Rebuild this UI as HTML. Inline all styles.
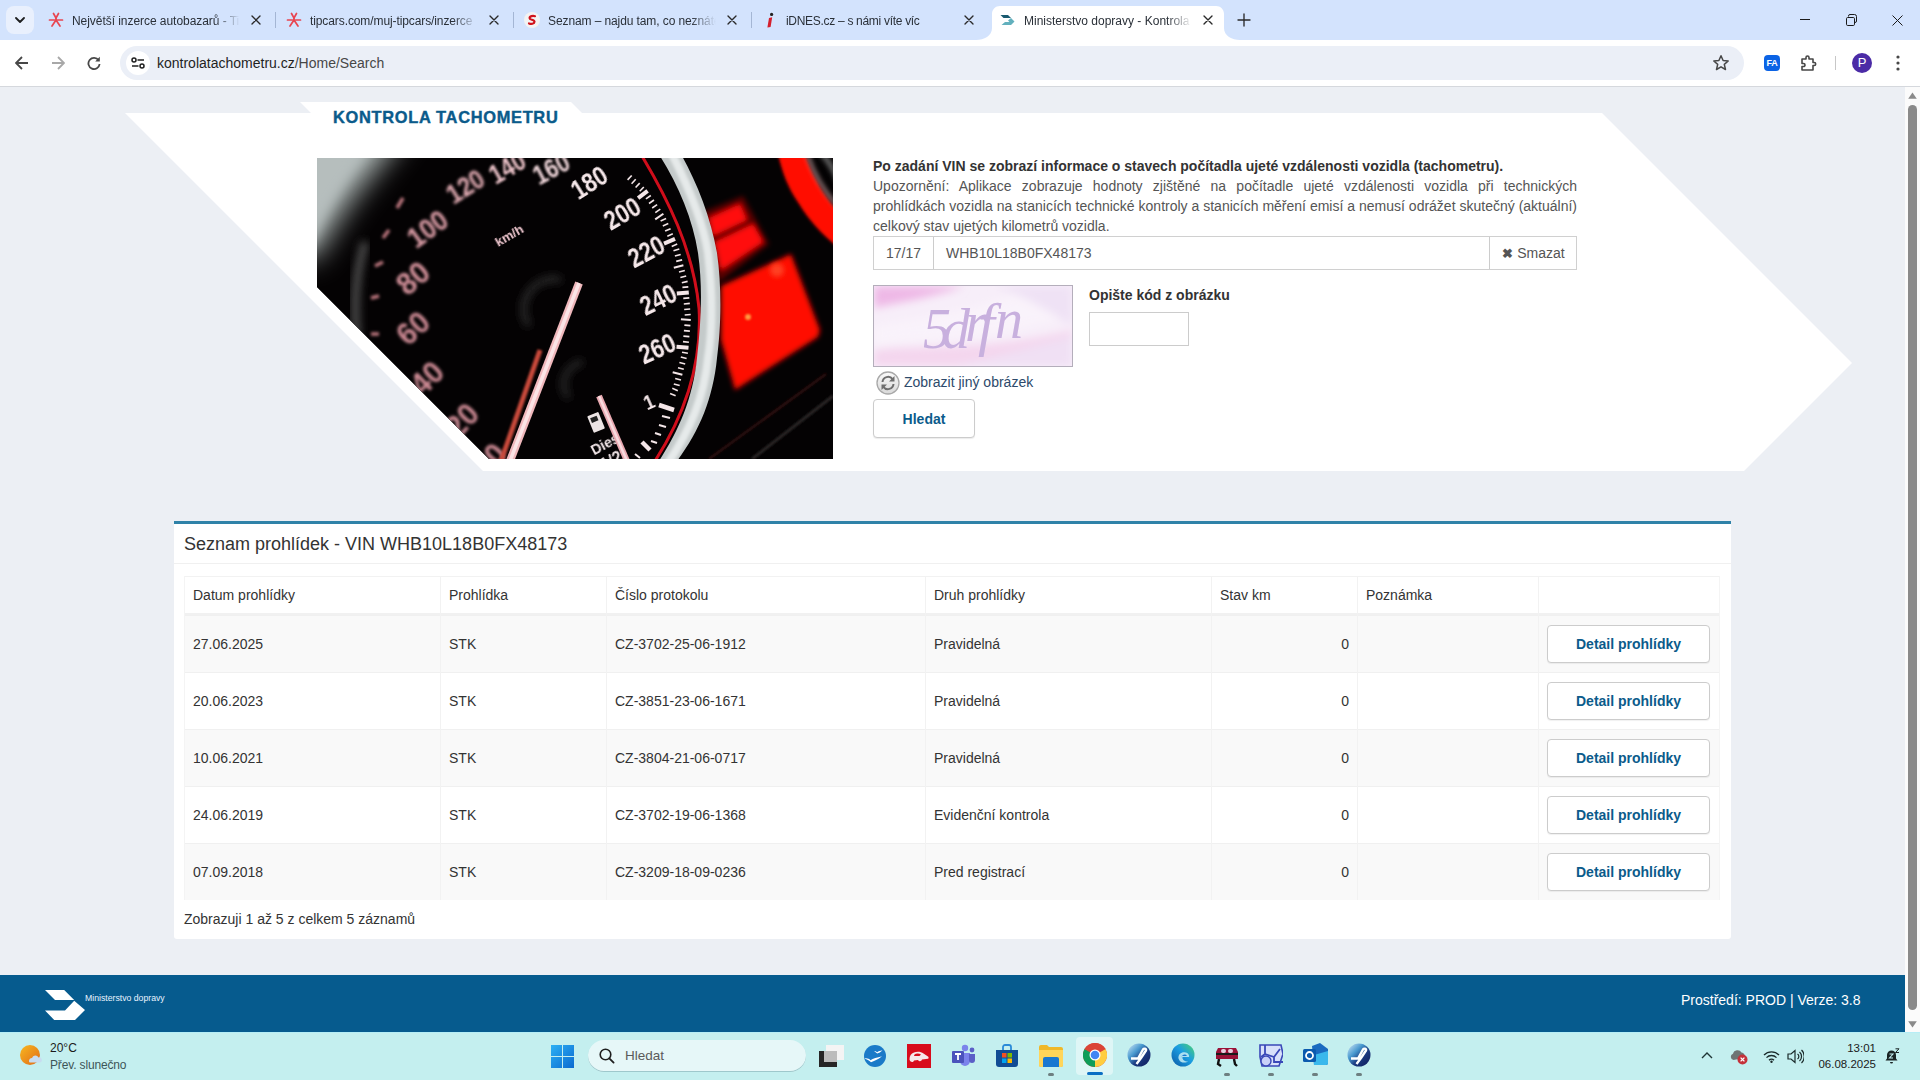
<!DOCTYPE html>
<html><head><meta charset="utf-8">
<style>
*{box-sizing:border-box;margin:0;padding:0}
html,body{width:1920px;height:1080px;overflow:hidden;font-family:"Liberation Sans",sans-serif;background:#eceff4}
.abs{position:absolute}
svg{display:block}
#tabstrip{position:absolute;left:0;top:0;width:1920px;height:40px;background:#d3e3fd}
.tab{position:absolute;top:0;height:40px;font-size:12px;color:#1f1f1f}
.tab .t{position:absolute;top:14px;white-space:nowrap;overflow:hidden;line-height:14px}
.tab .x{position:absolute;top:13px;width:14px;height:14px}
.sep{position:absolute;top:12px;width:1px;height:16px;background:#a4b6d4}
.ttxt{top:14px;font-size:12px;letter-spacing:-0.3px;line-height:14px;color:#2a3038;white-space:nowrap;overflow:hidden;-webkit-mask-image:linear-gradient(90deg,#000 85%,transparent 100%)}
#toolbar{position:absolute;left:0;top:40px;width:1920px;height:46px;background:#fff}
#omni{position:absolute;left:120px;top:6px;width:1624px;height:34px;border-radius:17px;background:#ebeff7}
#page{position:absolute;left:0;top:87px;width:1905px;height:945px;background:#eceff4;overflow:hidden}
#topline{position:absolute;left:0;top:86px;width:1920px;height:1px;background:#d5d8dd}
#scroll{position:absolute;left:1905px;top:87px;width:15px;height:945px;background:#fbfbfb}
.cell{font-size:14px;line-height:20px;color:#333;white-space:nowrap}
.btn{width:163px;height:38px;border:1px solid #ccc;border-radius:4px;background:#fff;box-shadow:0 1px 1px rgba(0,0,0,.06);font-size:14px;font-weight:bold;color:#0b5b8b;line-height:36px;text-align:center}
#taskbar{position:absolute;left:0;top:1032px;width:1920px;height:48px;background:#c4efef}
</style></head><body>
<div id="tabstrip">
<div class="abs" style="left:6px;top:6px;width:28px;height:28px;border-radius:8px;background:#e9f0fd"><svg class="abs" style="left:9px;top:11px" width="10" height="6" viewBox="0 0 10 6"><path d="M1 1L5 5L9 1" stroke="#1f1f1f" stroke-width="1.8" fill="none" stroke-linecap="round" stroke-linejoin="round"/></svg></div>
<div class="abs" style="left:48px;top:12px;width:16px;height:16px"><svg width="16" height="16" viewBox="0 0 16 16"><g stroke="#e84550" stroke-width="1.7" stroke-linecap="round" fill="none"><path d="M5.5 1.5L8 6L10.5 1.5"/><path d="M8 6V8"/><path d="M1.5 8H6.5M9.5 8H14.5"/><path d="M8 8L4 14M8 8L12 14"/></g></svg></div><div class="abs ttxt" style="left:72px;width:168px;letter-spacing:-0.05px">Největší inzerce autobazarů - TipCars</div><div class="abs" style="left:251px;top:15px;width:10px;height:10px"><svg width="10" height="10" viewBox="0 0 10 10"><path d="M1 1L9 9M9 1L1 9" stroke="#2a2a2a" stroke-width="1.35" stroke-linecap="round"/></svg></div>
<div class="sep" style="left:275px"></div>
<div class="abs" style="left:286px;top:12px;width:16px;height:16px"><svg width="16" height="16" viewBox="0 0 16 16"><g stroke="#e84550" stroke-width="1.7" stroke-linecap="round" fill="none"><path d="M5.5 1.5L8 6L10.5 1.5"/><path d="M8 6V8"/><path d="M1.5 8H6.5M9.5 8H14.5"/><path d="M8 8L4 14M8 8L12 14"/></g></svg></div><div class="abs ttxt" style="left:310px;width:168px;letter-spacing:-0.1px">tipcars.com/muj-tipcars/inzerce</div><div class="abs" style="left:489px;top:15px;width:10px;height:10px"><svg width="10" height="10" viewBox="0 0 10 10"><path d="M1 1L9 9M9 1L1 9" stroke="#2a2a2a" stroke-width="1.35" stroke-linecap="round"/></svg></div>
<div class="sep" style="left:513px"></div>
<div class="abs" style="left:524px;top:12px;width:16px;height:16px"><svg width="16" height="16" viewBox="0 0 16 16"><circle cx="8" cy="8" r="8" fill="#f3f3f3"/><path d="M11 4.2C9 3.6 5.5 4 5.6 6.2C5.7 8 10.6 7.6 10.5 9.8C10.4 12 7 12.2 5 11.4" stroke="#d0121b" stroke-width="2.2" fill="none" stroke-linecap="round"/></svg></div><div class="abs ttxt" style="left:548px;width:168px;letter-spacing:-0.1px">Seznam – najdu tam, co neznáte</div><div class="abs" style="left:727px;top:15px;width:10px;height:10px"><svg width="10" height="10" viewBox="0 0 10 10"><path d="M1 1L9 9M9 1L1 9" stroke="#2a2a2a" stroke-width="1.35" stroke-linecap="round"/></svg></div>
<div class="sep" style="left:751px"></div>
<div class="abs" style="left:762px;top:12px;width:16px;height:16px"><svg width="16" height="16" viewBox="0 0 16 16"><path d="M7 6L10.2 5.2L8.6 15L5.4 15.6Z" fill="#d4202e"/><circle cx="9.6" cy="2.4" r="1.6" fill="#222"/></svg></div><div class="abs ttxt" style="left:786px;width:168px">iDNES.cz – s námi víte víc</div><div class="abs" style="left:964px;top:15px;width:10px;height:10px"><svg width="10" height="10" viewBox="0 0 10 10"><path d="M1 1L9 9M9 1L1 9" stroke="#2a2a2a" stroke-width="1.35" stroke-linecap="round"/></svg></div>
<svg class="abs" style="left:976px;top:6px" width="264" height="34" viewBox="0 0 264 34"><path d="M0 34C8 34 16 30 16 22V8C16 3.5 19.5 0 24 0H240C244.5 0 248 3.5 248 8V22C248 30 256 34 264 34Z" fill="#fff"/></svg>
<div class="abs" style="left:1000px;top:12px;width:16px;height:16px"><svg width="16" height="16" viewBox="0 0 16 16"><path d="M0.5 3H8L11 6H3.5Z" fill="#195a70"/><path d="M11 6L14.5 9.5L11 13H1.5L5 10H9.5L8 8.5Z" fill="#62b0bd"/></svg></div><div class="abs ttxt" style="left:1024px;width:168px;letter-spacing:0">Ministerstvo dopravy - Kontrola tachometru</div><div class="abs" style="left:1203px;top:15px;width:10px;height:10px"><svg width="10" height="10" viewBox="0 0 10 10"><path d="M1 1L9 9M9 1L1 9" stroke="#2a2a2a" stroke-width="1.35" stroke-linecap="round"/></svg></div>
<svg class="abs" style="left:1237px;top:13px" width="14" height="14" viewBox="0 0 14 14"><path d="M7 1V13M1 7H13" stroke="#2a2a2a" stroke-width="1.35" stroke-linecap="round"/></svg>
<svg class="abs" style="left:1800px;top:14px" width="10" height="10" viewBox="0 0 10 10"><path d="M0 5.5H10" stroke="#1a1a1a" stroke-width="1"/></svg>
<svg class="abs" style="left:1845px;top:14px" width="12" height="12" viewBox="0 0 12 12"><path d="M3.5 2.5V2Q3.5 0.5 5 0.5H9.5Q11.5 0.5 11.5 2.5V7Q11.5 8.5 10 8.5H9.5" stroke="#1a1a1a" stroke-width="1" fill="none"/><rect x="1.5" y="3.5" width="8" height="8" rx="1.2" stroke="#1a1a1a" stroke-width="1" fill="none"/></svg>
<svg class="abs" style="left:1892px;top:15px" width="11" height="11" viewBox="0 0 11 11"><path d="M0.5 0.5L10.5 10.5M10.5 0.5L0.5 10.5" stroke="#1a1a1a" stroke-width="1"/></svg>
</div>
<div id="toolbar">
<svg class="abs" style="left:15px;top:16px" width="14" height="14" viewBox="0 0 14 14"><path d="M13 7H1.5M7 1L1 7L7 13" stroke="#474747" stroke-width="1.8" fill="none"/></svg>
<svg class="abs" style="left:51px;top:16px" width="14" height="14" viewBox="0 0 14 14"><path d="M1 7H12.5M7 1L13 7L7 13" stroke="#a8a8a8" stroke-width="1.8" fill="none"/></svg>
<svg class="abs" style="left:87px;top:16px" width="14" height="14" viewBox="0 0 14 14"><path d="M11.6 4.2A5.6 5.6 0 1 0 12.6 8" stroke="#474747" stroke-width="1.8" fill="none"/><path d="M12.8 0.8V5.4H8.2Z" fill="#474747"/></svg>
<div id="omni">
<div class="abs" style="left:6px;top:5px;width:24px;height:24px;border-radius:50%;background:#fff"><svg class="abs" style="left:5px;top:6px" width="14" height="12" viewBox="0 0 14 12"><circle cx="3" cy="3" r="2" stroke="#1f1f1f" stroke-width="1.5" fill="none"/><path d="M6.5 3H13" stroke="#1f1f1f" stroke-width="1.5"/><circle cx="11" cy="9" r="2" stroke="#1f1f1f" stroke-width="1.5" fill="none"/><path d="M1 9H7.5" stroke="#1f1f1f" stroke-width="1.5"/></svg></div>
<div class="abs" style="left:37px;top:8px;font-size:14px;line-height:18px;color:#1f1f1f;white-space:nowrap">kontrolatachometru.cz<span style="color:#474747">/Home/Search</span></div>
<svg class="abs" style="left:1592px;top:8px" width="18" height="18" viewBox="0 0 18 18"><path d="M9 1.8L11.1 6.5L16.2 7L12.3 10.4L13.5 15.5L9 12.8L4.5 15.5L5.7 10.4L1.8 7L6.9 6.5Z" stroke="#474747" stroke-width="1.5" fill="none" stroke-linejoin="round"/></svg>
</div>
<div class="abs" style="left:1764px;top:15px;width:16px;height:16px;border-radius:4px;background:#0b63e5;color:#fff;font-size:9px;font-weight:bold;line-height:16px;text-align:center;letter-spacing:-0.3px">FA</div>
<svg class="abs" style="left:1800px;top:14px" width="18" height="18" viewBox="0 0 18 18"><path d="M2 5H6V3.5A1.5 1.5 0 0 1 9 3.5V5H13V8.5H14.2A1.5 1.5 0 0 1 14.2 11.5H13V16H2V12.5H3.5A1.5 1.5 0 0 0 3.5 9.5H2Z" stroke="#474747" stroke-width="1.6" fill="none" stroke-linejoin="round"/></svg>
<div class="abs" style="left:1835px;top:16px;width:1px;height:14px;background:#c7c7c7"></div>
<div class="abs" style="left:1852px;top:13px;width:20px;height:20px;border-radius:50%;background:#4b2ba6;color:#fff;font-size:13px;line-height:20px;text-align:center">P</div>
<svg class="abs" style="left:1895px;top:15px" width="6" height="16" viewBox="0 0 6 16"><circle cx="3" cy="2" r="1.6" fill="#474747"/><circle cx="3" cy="8" r="1.6" fill="#474747"/><circle cx="3" cy="14" r="1.6" fill="#474747"/></svg>
</div>
<div id="topline"></div>
<div id="page">
<svg class="abs" style="left:0;top:0" width="1905" height="945" viewBox="0 87 1905 945">
<polygon points="125,113 1602,113 1852,363 1744,471 483,471" fill="#fff"/>
<polygon points="300,102 571,102 582,113 311,113" fill="#fff"/>
</svg>
<div class="abs" id="ttl" style="left:333px;top:20px;font-size:16.4px;letter-spacing:0.7px;-webkit-text-stroke:0.4px #0b5b8b;font-weight:bold;color:#0b5b8b;line-height:20px;white-space:nowrap">KONTROLA TACHOMETRU</div>
<div class="abs" id="speedo" style="left:317px;top:71px;width:516px;height:301px;clip-path:polygon(0 0,516px 0,516px 301px,172px 301px,0 129px);background:#050303"><svg width="516" height="301" viewBox="0 0 516 301">
<defs>
<filter id="b1" x="-30%" y="-30%" width="160%" height="160%"><feGaussianBlur stdDeviation="1.3"/></filter>
<filter id="b15" x="-30%" y="-30%" width="160%" height="160%"><feGaussianBlur stdDeviation="1.8"/></filter>
<filter id="b2" x="-30%" y="-30%" width="160%" height="160%"><feGaussianBlur stdDeviation="0.5"/></filter>
<filter id="b3" x="-30%" y="-30%" width="160%" height="160%"><feGaussianBlur stdDeviation="2.5"/></filter>
<filter id="b4" x="-50%" y="-50%" width="200%" height="200%"><feGaussianBlur stdDeviation="4"/></filter>
<filter id="b6" x="-50%" y="-50%" width="200%" height="200%"><feGaussianBlur stdDeviation="6"/></filter>
<filter id="b10" x="-50%" y="-50%" width="200%" height="200%"><feGaussianBlur stdDeviation="14"/></filter>
</defs>
<rect width="516" height="301" fill="#040203"/>
<g filter="url(#b10)">
<path d="M-30 -30 L92 -30 C72 0 52 20 36 42 C22 62 12 78 0 100 L-30 100 Z" fill="#a4adac"/>
</g>
<path d="M-10 -10 L55 -10 C35 15 15 40 -10 95 Z" fill="#b6bebd" filter="url(#b6)"/>
<path d="M48 84 C40 110 36 140 40 178" stroke="#505050" stroke-width="8" fill="none" filter="url(#b4)"/>
<g filter="url(#b4)">
<path d="M212 168 A30 30 0 0 1 244 122" stroke="#2e2e2e" stroke-width="6" fill="none"/>
<path d="M252 240 A22 22 0 0 1 266 204" stroke="#2a2a2a" stroke-width="6" fill="none"/>
</g>
<path d="M500 -10 C520 10 530 40 530 60" stroke="#6a6a6a" stroke-width="5" fill="none" filter="url(#b3)"/>
<path d="M461 -4 C465 15 472 32 482 46 C492 62 504 76 522 90 L522 54 C510 42 502 28 496 16 C492 8 490 2 488 -4 Z" fill="#ff0a06" filter="url(#b15)"/><path d="M490 -4 C496 14 504 30 520 48" stroke="#f0c0c0" stroke-width="3" fill="none" filter="url(#b3)" opacity="0.8"/>
<g filter="url(#b3)">
<path d="M386 54 L426 38 L452 86 L402 124 Z" fill="#5a0404"/>
<path d="M392 60 L423 46 L430 62 L396 78 Z" fill="#ff0a08"/>
<path d="M398 84 L436 66 L446 84 L404 112 Z" fill="#ff0a08"/>
<path d="M404 128 L474 96 L503 172 L501 179 L418 232 L404 182 Z" fill="#ff0a06"/>
</g>
<circle cx="460" cy="112" r="7" fill="#ff4020" filter="url(#b3)"/>
<circle cx="431" cy="159" r="3" fill="#ff9a40" filter="url(#b1)"/>
<path d="M325 -2 C350 40 376 90 382 150 C385 200 372 250 338 303" stroke="#d0101a" stroke-width="3" fill="none" filter="url(#b2)"/>
<path d="M365 -2 C380 25 394 60 400 95 C405 130 404 170 400 200 C396 240 383 272 360 303 L342 303 C362 272 376 240 380 200 C384 165 386 130 381 95 C376 62 362 28 343 -2 Z" fill="#c4caca" filter="url(#b2)"/>
<path d="M355 -4 C371 28 386 62 391 95 C395 130 396 170 391 200 C387 240 373 272 351 305" stroke="#e6eaea" stroke-width="8" fill="none" filter="url(#b15)"/>
<path d="M392 301 L509 216" stroke="#3a1818" stroke-width="2" filter="url(#b1)"/>
<path d="M435 301 L516 238" stroke="#2a2828" stroke-width="3" filter="url(#b1)"/>
<g stroke="#f4e6e8" filter="url(#b2)">
<path d="M314.7 17.5L310.6 21.9" stroke-width="1.6"/><path d="M318.7 21.3L314.6 25.7" stroke-width="1.6"/><path d="M322.7 25.1L318.6 29.5" stroke-width="1.6"/><path d="M326.8 29.0L322.7 33.3" stroke-width="1.6"/><path d="M330.6 32.9L321.1 40.2" stroke-width="4"/><path d="M333.8 37.5L328.9 40.9" stroke-width="1.6"/><path d="M337.0 42.0L332.0 45.5" stroke-width="1.6"/><path d="M340.1 46.6L335.2 50.0" stroke-width="1.6"/><path d="M343.3 51.2L338.3 54.6" stroke-width="1.6"/><path d="M346.4 55.7L338.2 61.4" stroke-width="2"/><path d="M349.1 60.6L343.6 63.0" stroke-width="1.6"/><path d="M351.3 65.6L345.8 68.0" stroke-width="1.6"/><path d="M353.6 70.7L348.1 73.1" stroke-width="1.6"/><path d="M355.8 75.8L350.3 78.2" stroke-width="1.6"/><path d="M358.0 80.9L347.0 85.7" stroke-width="4"/><path d="M360.2 86.0L354.7 88.4" stroke-width="1.6"/><path d="M362.3 91.1L356.5 92.8" stroke-width="1.6"/><path d="M363.7 96.5L357.9 98.0" stroke-width="1.6"/><path d="M365.1 101.9L359.2 103.4" stroke-width="1.6"/><path d="M366.4 107.3L356.8 109.7" stroke-width="2"/><path d="M367.8 112.6L362.0 114.1" stroke-width="1.6"/><path d="M369.2 118.0L363.4 119.5" stroke-width="1.6"/><path d="M370.6 123.4L364.8 124.8" stroke-width="1.6"/><path d="M371.3 128.9L365.4 129.4" stroke-width="1.6"/><path d="M371.8 134.4L359.8 135.4" stroke-width="4"/><path d="M372.3 139.9L366.3 140.4" stroke-width="1.6"/><path d="M372.8 145.4L366.8 146.0" stroke-width="1.6"/><path d="M373.2 151.0L367.2 151.5" stroke-width="1.6"/><path d="M373.7 156.5L367.7 157.0" stroke-width="1.6"/><path d="M373.8 162.0L363.9 161.2" stroke-width="2"/><path d="M373.4 167.6L367.4 167.1" stroke-width="1.6"/><path d="M372.9 173.1L366.9 172.6" stroke-width="1.6"/><path d="M372.4 178.6L366.4 178.1" stroke-width="1.6"/><path d="M371.9 184.2L366.0 183.6" stroke-width="1.6"/><path d="M371.5 189.7L359.5 188.7" stroke-width="4"/><path d="M370.9 195.2L365.0 194.2" stroke-width="1.6"/><path d="M369.6 200.6L363.8 199.1" stroke-width="1.6"/><path d="M368.2 206.0L362.4 204.5" stroke-width="1.6"/><path d="M366.8 211.3L361.0 209.8" stroke-width="1.6"/><path d="M365.4 216.7L355.7 214.2" stroke-width="2"/><path d="M364.0 222.1L358.2 220.6" stroke-width="1.6"/><path d="M362.7 227.5L356.8 226.0" stroke-width="1.6"/><path d="M360.8 232.7L355.3 230.3" stroke-width="1.6"/><path d="M358.6 237.8L353.1 235.4" stroke-width="1.6"/><path d="M357 252L342 247" stroke-width="4.5"/><path d="M353 260L345 258" stroke-width="2"/><path d="M349 269L342 267" stroke-width="2"/><path d="M344 277L338 275" stroke-width="2"/><path d="M340 285L334 283" stroke-width="2"/><path d="M333 292L325 284" stroke-width="4.5"/><path d="M323 300L318 296" stroke-width="2"/>
</g>
<g stroke="#c07880" stroke-width="3.5" filter="url(#b15)">
<path d="M86 40 L80 50"/><path d="M72 72 L66 80"/><path d="M66 104 L58 108"/><path d="M62 138 L54 140"/><path d="M62 176 L54 176"/>
</g>
<g font-family="Liberation Sans" stroke-linejoin="round">
<text transform="translate(272,24) rotate(-32) scale(0.8,1)" text-anchor="middle" dy="0.36em" font-size="28" fill="#f6e8ea" filter="url(#b2)" font-weight="bold">180</text>
<text transform="translate(305,55) rotate(-30) scale(0.8,1)" text-anchor="middle" dy="0.36em" font-size="28" fill="#f6e8ea" filter="url(#b2)" font-weight="bold">200</text>
<text transform="translate(329,93) rotate(-28) scale(0.8,1)" text-anchor="middle" dy="0.36em" font-size="28" fill="#f6e8ea" filter="url(#b2)" font-weight="bold">220</text>
<text transform="translate(341,141) rotate(-26) scale(0.8,1)" text-anchor="middle" dy="0.36em" font-size="28" fill="#f6e8ea" filter="url(#b2)" font-weight="bold">240</text>
<text transform="translate(340,190) rotate(-24) scale(0.8,1)" text-anchor="middle" dy="0.36em" font-size="28" fill="#f6e8ea" filter="url(#b2)" font-weight="bold">260</text>
<text transform="translate(332,244) rotate(-24) scale(0.9,1)" text-anchor="middle" dy="0.36em" font-size="20" fill="#f6e8ea" filter="url(#b2)" font-weight="bold">1</text>
<text transform="translate(234,10) rotate(-28) scale(0.8,1)" text-anchor="middle" dy="0.36em" font-size="28" fill="#f2d8dc" filter="url(#b1)" font-weight="bold">160</text>
<text transform="translate(190,9) rotate(-30) scale(0.8,1)" text-anchor="middle" dy="0.36em" font-size="28" fill="#eec4ca" filter="url(#b1)" font-weight="bold">140</text>
<text transform="translate(148,28) rotate(-32) scale(0.85,1)" text-anchor="middle" dy="0.36em" font-size="28" fill="#e8b0b8" filter="url(#b15)" font-weight="bold">120</text>
<text transform="translate(110,70) rotate(-36) scale(0.85,1)" text-anchor="middle" dy="0.36em" font-size="30" fill="#e0a0aa" filter="url(#b15)" font-weight="bold">100</text>
<text transform="translate(96,120) rotate(-40) scale(0.95,1)" text-anchor="middle" dy="0.36em" font-size="31" fill="#d8949e" filter="url(#b15)" font-weight="bold">80</text>
<text transform="translate(96,170) rotate(-42) scale(0.95,1)" text-anchor="middle" dy="0.36em" font-size="31" fill="#d08c96" filter="url(#b15)" font-weight="bold">60</text>
<text transform="translate(110,220) rotate(-44) scale(0.95,1)" text-anchor="middle" dy="0.36em" font-size="31" fill="#d08c96" filter="url(#b15)" font-weight="bold">40</text>
<text transform="translate(145,262) rotate(-46) scale(0.95,1)" text-anchor="middle" dy="0.36em" font-size="31" fill="#d08c96" filter="url(#b15)" font-weight="bold">20</text>
<text transform="translate(178,296) rotate(-48) scale(0.95,1)" text-anchor="middle" dy="0.36em" font-size="31" fill="#d08c96" filter="url(#b15)" font-weight="bold">0</text>
<text transform="translate(192,77) rotate(-30) scale(1,1)" text-anchor="middle" dy="0.36em" font-size="13" fill="#f0c8d0" filter="url(#b2)" font-weight="bold">km/h</text>
<text transform="translate(288,286) rotate(-28) scale(0.95,1)" text-anchor="middle" dy="0.36em" font-size="15" fill="#f0e4e6" filter="url(#b2)" font-weight="bold">Dies</text>
<text transform="translate(294,302) rotate(-28) scale(0.95,1)" text-anchor="middle" dy="0.36em" font-size="17" fill="#f0e4e6" filter="url(#b2)" font-weight="bold">1/2</text>
</g>
<g filter="url(#b2)"><rect x="273" y="255" width="12" height="18" rx="1" fill="#ece4e4" transform="rotate(-22 280 264)"/><rect x="275" y="258" width="7" height="5" fill="#222" transform="rotate(-22 280 264)"/></g>
<path d="M223 192 L184 303" stroke="#c8483a" stroke-width="5" filter="url(#b1)"/>
<path d="M262 125 L193 303" stroke="#f0b8bc" stroke-width="8" filter="url(#b2)"/>
<path d="M262 125 L193 303" stroke="#fbe4e6" stroke-width="3.5" filter="url(#b2)"/>
<path d="M282 238 L310 303" stroke="#e8a8b0" stroke-width="6" filter="url(#b2)"/>
<path d="M282 238 L310 303" stroke="#f8dade" stroke-width="2.5" filter="url(#b2)"/>
</svg></div>
<div class="abs" id="info" style="left:873px;top:69px;width:704px;font-size:14px;line-height:20px;color:#333">
<div style="font-weight:bold">Po zadání VIN se zobrazí informace o stavech počítadla ujeté vzdálenosti vozidla (tachometru).</div>
<div style="text-align:justify;color:#555">Upozornění: Aplikace zobrazuje hodnoty zjištěné na počítadle ujeté vzdálenosti vozidla při technických prohlídkách vozidla na stanicích technické kontroly a stanicích měření emisí a nemusí odrážet skutečný (aktuální) celkový stav ujetých kilometrů vozidla.</div>
</div>
<div class="abs" id="ig" style="left:873px;top:149px;width:704px;height:34px;border:1px solid #d0d0d0;background:#fff;font-size:14px;color:#555">
<div class="abs" style="left:0;top:0;width:60px;height:32px;background:#fff;border-right:1px solid #ccc;line-height:32px;text-align:center">17/17</div>
<div class="abs" style="left:72px;top:0;line-height:32px">WHB10L18B0FX48173</div>
<div class="abs" style="left:615px;top:0;width:88px;height:32px;border-left:1px solid #ccc;line-height:32px;text-align:center"><span style="font-size:13px;font-weight:bold">&#10006;</span> Smazat</div>
</div>
<div class="abs" id="captcha" style="left:873px;top:198px;width:200px;height:82px;border:1px solid #b4aebb;overflow:hidden;background:#f8f0fa"><svg width="198" height="80" viewBox="0 0 198 80"><defs><filter id="cb" x="-20%" y="-50%" width="140%" height="200%"><feGaussianBlur stdDeviation="4"/></filter></defs>
<rect width="198" height="80" fill="#f7eef9"/>
<g filter="url(#cb)">
<path d="M0 0H90C70 8 40 14 0 22Z" fill="#eeb8e6"/>
<path d="M0 60C40 52 90 60 198 30V0H160C120 20 60 30 0 40Z" fill="#faf4fb" opacity="0.8"/>
<path d="M0 64C50 58 110 66 198 44V80H0Z" fill="#f4d6ee"/>
<path d="M80 80C120 72 160 60 198 50V80Z" fill="#f0e0f4"/>
<path d="M120 0C150 10 175 25 198 40V0Z" fill="#efe2f5"/>
</g>
<g font-family="Liberation Serif" font-style="italic" font-size="56" fill="#c8b0de"><text x="49" y="62">5</text><text x="68" y="62">d</text><text x="91" y="55">r</text><text x="104" y="58" font-size="60">f</text><text x="121" y="52">n</text></g>
</svg></div>
<div class="abs" style="left:1089px;top:198px;font-size:14px;font-weight:bold;color:#333;line-height:20px">Opište kód z obrázku</div>
<div class="abs" style="left:1089px;top:225px;width:100px;height:34px;border:1px solid #ccc;background:#fff"></div>
<svg class="abs" style="left:876px;top:284px" width="24" height="24" viewBox="0 0 24 24"><defs><linearGradient id="rg" x1="0" y1="0" x2="0" y2="1"><stop offset="0" stop-color="#fafafa"/><stop offset="1" stop-color="#d8d8d8"/></linearGradient></defs><circle cx="12" cy="12" r="11" fill="url(#rg)" stroke="#a8a8a8" stroke-width="1.3"/><path d="M6.5 11A5.6 5.6 0 0 1 16.6 8.2" stroke="#6e6e6e" stroke-width="2" fill="none"/><path d="M18.5 5V10.5H13Z" fill="#6e6e6e"/><path d="M17.5 13A5.6 5.6 0 0 1 7.4 15.8" stroke="#6e6e6e" stroke-width="2" fill="none"/><path d="M5.5 19V13.5H11Z" fill="#6e6e6e"/></svg>
<div class="abs" style="left:904px;top:285px;font-size:14px;line-height:20px;color:#2d4a6b">Zobrazit jiný obrázek</div>
<div class="abs" style="left:873px;top:312px;width:102px;height:39px;border:1px solid #ccc;border-radius:4px;background:#fff;box-shadow:0 1px 1px rgba(0,0,0,.08);font-size:14px;font-weight:bold;color:#0b5b8b;line-height:39px;text-align:center">Hledat</div>
<div class="abs" id="panel" style="left:174px;top:434px;width:1557px;height:418px;background:#fff;border-top:3px solid #2f82a8;border-radius:0 0 3px 3px">
<div class="abs" style="left:0;top:0;width:100%;height:40px;border-bottom:1px solid #f0f0f0"></div>
<div class="abs" style="left:10px;top:10px;font-size:18px;line-height:20px;color:#333;white-space:nowrap">Seznam prohlídek - VIN WHB10L18B0FX48173</div>
</div>
<div id="tbl">
<div class="abs" style="left:184px;top:489px;width:1536px;height:39px;background:#fff;border-top:1px solid #f2f2f2;border-bottom:2px solid #f1f1f1"></div>
<div class="abs cell" style="left:193px;top:498px">Datum prohlídky</div>
<div class="abs cell" style="left:449px;top:498px">Prohlídka</div>
<div class="abs cell" style="left:615px;top:498px">Číslo protokolu</div>
<div class="abs cell" style="left:934px;top:498px">Druh prohlídky</div>
<div class="abs cell" style="left:1220px;top:498px">Stav km</div>
<div class="abs cell" style="left:1366px;top:498px">Poznámka</div>
<div class="abs cell" style="left:1547px;top:498px"></div>
<div class="abs" style="left:184px;top:528px;width:1536px;height:57px;background:#f9f9f9;border-top:1px solid #f0f0f0"></div>
<div class="abs cell" style="left:193px;top:547px">27.06.2025</div>
<div class="abs cell" style="left:449px;top:547px">STK</div>
<div class="abs cell" style="left:615px;top:547px">CZ-3702-25-06-1912</div>
<div class="abs cell" style="left:934px;top:547px">Pravidelná</div>
<div class="abs cell" style="left:1211px;width:138px;text-align:right;top:547px">0</div>
<div class="abs btn" style="left:1547px;top:538px">Detail prohlídky</div>
<div class="abs" style="left:184px;top:585px;width:1536px;height:57px;background:#fff;border-top:1px solid #f0f0f0"></div>
<div class="abs cell" style="left:193px;top:604px">20.06.2023</div>
<div class="abs cell" style="left:449px;top:604px">STK</div>
<div class="abs cell" style="left:615px;top:604px">CZ-3851-23-06-1671</div>
<div class="abs cell" style="left:934px;top:604px">Pravidelná</div>
<div class="abs cell" style="left:1211px;width:138px;text-align:right;top:604px">0</div>
<div class="abs btn" style="left:1547px;top:595px">Detail prohlídky</div>
<div class="abs" style="left:184px;top:642px;width:1536px;height:57px;background:#f9f9f9;border-top:1px solid #f0f0f0"></div>
<div class="abs cell" style="left:193px;top:661px">10.06.2021</div>
<div class="abs cell" style="left:449px;top:661px">STK</div>
<div class="abs cell" style="left:615px;top:661px">CZ-3804-21-06-0717</div>
<div class="abs cell" style="left:934px;top:661px">Pravidelná</div>
<div class="abs cell" style="left:1211px;width:138px;text-align:right;top:661px">0</div>
<div class="abs btn" style="left:1547px;top:652px">Detail prohlídky</div>
<div class="abs" style="left:184px;top:699px;width:1536px;height:57px;background:#fff;border-top:1px solid #f0f0f0"></div>
<div class="abs cell" style="left:193px;top:718px">24.06.2019</div>
<div class="abs cell" style="left:449px;top:718px">STK</div>
<div class="abs cell" style="left:615px;top:718px">CZ-3702-19-06-1368</div>
<div class="abs cell" style="left:934px;top:718px">Evidenční kontrola</div>
<div class="abs cell" style="left:1211px;width:138px;text-align:right;top:718px">0</div>
<div class="abs btn" style="left:1547px;top:709px">Detail prohlídky</div>
<div class="abs" style="left:184px;top:756px;width:1536px;height:57px;background:#f9f9f9;border-top:1px solid #f0f0f0"></div>
<div class="abs cell" style="left:193px;top:775px">07.09.2018</div>
<div class="abs cell" style="left:449px;top:775px">STK</div>
<div class="abs cell" style="left:615px;top:775px">CZ-3209-18-09-0236</div>
<div class="abs cell" style="left:934px;top:775px">Pred registrací</div>
<div class="abs cell" style="left:1211px;width:138px;text-align:right;top:775px">0</div>
<div class="abs btn" style="left:1547px;top:766px">Detail prohlídky</div>
<div class="abs" style="left:440px;top:489px;width:1px;height:324px;background:#f2f2f2"></div>
<div class="abs" style="left:606px;top:489px;width:1px;height:324px;background:#f2f2f2"></div>
<div class="abs" style="left:925px;top:489px;width:1px;height:324px;background:#f2f2f2"></div>
<div class="abs" style="left:1211px;top:489px;width:1px;height:324px;background:#f2f2f2"></div>
<div class="abs" style="left:1357px;top:489px;width:1px;height:324px;background:#f2f2f2"></div>
<div class="abs" style="left:1538px;top:489px;width:1px;height:324px;background:#f2f2f2"></div>
<div class="abs" style="left:184px;top:489px;width:1px;height:324px;background:#f4f4f4"></div>
<div class="abs" style="left:1719px;top:489px;width:1px;height:324px;background:#f4f4f4"></div>
<div class="abs cell" style="left:184px;top:822px">Zobrazuji 1 až 5 z celkem 5 záznamů</div>
</div>
<div class="abs" id="footer" style="left:0;top:888px;width:1905px;height:57px;background:#065b8e"><svg class="abs" style="left:45px;top:15px" width="42" height="32" viewBox="45 990 42 32"><path d="M45 990H64.2L74.2 1000H55Z" fill="#fff"/><path d="M45 1010.4H65L74.2 1000.8L85 1010L75 1020H54.2Z" fill="#fff"/></svg>
<div class="abs" style="left:85px;top:17.5px;font-size:8.7px;line-height:10px;color:#e8f4ff;white-space:nowrap">Ministerstvo dopravy</div>
<div class="abs" style="left:1681px;top:17px;font-size:14px;line-height:16px;color:#fff;white-space:nowrap">Prostředí: PROD | Verze: 3.8</div></div>
</div>
<div id="scroll">
<svg class="abs" style="left:3px;top:5px" width="9" height="7" viewBox="0 0 9 7"><path d="M4.5 0.5L8.8 6.8H0.2Z" fill="#8a8a8a"/></svg>
<div class="abs" style="left:3px;top:18px;width:9px;height:905px;border-radius:4.5px;background:#8a8a8a"></div>
<svg class="abs" style="left:3px;top:934px" width="9" height="7" viewBox="0 0 9 7"><path d="M0.2 0.2H8.8L4.5 6.5Z" fill="#8a8a8a"/></svg>
</div>
<div id="taskbar">
<div class="abs" style="left:0;top:0;width:1920px;height:1px;background:#b6eef6"></div>
<svg class="abs" style="left:19px;top:12px" width="24" height="24" viewBox="0 0 24 24"><defs><linearGradient id="sun" x1="0" y1="0" x2="1" y2="1"><stop offset="0" stop-color="#f8b820"/><stop offset="1" stop-color="#e06a18"/></linearGradient></defs><circle cx="11" cy="11" r="10" fill="url(#sun)"/><path d="M10 17.5A3 3 0 0 1 13 14A3.5 3.5 0 0 1 19.5 13.5A2.6 2.6 0 0 1 21 18.5H11A1.5 1.5 0 0 1 10 17.5Z" fill="#c8dcf0"/></svg>
<div class="abs" style="left:50px;top:9px;font-size:12px;line-height:14px;color:#1a1a1a;white-space:nowrap">20°C</div>
<div class="abs" style="left:50px;top:25.5px;font-size:12px;letter-spacing:-0.15px;line-height:14px;color:#3d5558;white-space:nowrap">Přev. slunečno</div>
<svg class="abs" style="left:551px;top:13px" width="23" height="23" viewBox="0 0 23 23"><defs><linearGradient id="win" x1="0" y1="0" x2="1" y2="1"><stop offset="0" stop-color="#2cb0f4"/><stop offset="1" stop-color="#0a6ad0"/></linearGradient></defs><path d="M0 0H11V11H0ZM12 0H23V11H12ZM0 12H11V23H0ZM12 12H23V23H12Z" fill="url(#win)"/></svg>
<div class="abs" style="left:588px;top:8px;width:218px;height:32px;border-radius:16px;background:#e6f7f8;box-shadow:inset 0 -1px 0 #9ec8cc"></div>
<svg class="abs" style="left:599px;top:16px" width="16" height="16" viewBox="0 0 16 16"><circle cx="6.5" cy="6.5" r="5.3" stroke="#1f1f1f" stroke-width="1.6" fill="none"/><path d="M10.3 10.3L14.6 14.6" stroke="#1f1f1f" stroke-width="1.8" stroke-linecap="round"/></svg>
<div class="abs" style="left:625px;top:16px;font-size:13.5px;line-height:16px;color:#5a5a5a;white-space:nowrap">Hledat</div>
<svg class="abs" style="left:819px;top:13px" width="25" height="23" viewBox="0 0 25 23"><rect x="7" y="0" width="18" height="15" fill="#f4f4f4"/><rect x="0" y="6" width="18" height="16" fill="#262626"/><rect x="5" y="6" width="13" height="11" fill="#bcbcbc"/></svg>
<svg class="abs" style="left:863px;top:12px" width="24" height="24" viewBox="0 0 24 24"><circle cx="12" cy="12" r="11" fill="#1a7ac8"/><path d="M1.5 14.5C4 14 6 14.8 7.5 16.2C10 14.2 14 13.5 19 12.2C15 15.5 11 17 8 18.2C6 16.5 4 15.5 1.5 14.5Z" fill="#fff"/><path d="M11 7.2C12.5 7 13.5 7.5 14.2 8.2C15.5 7.2 17 6.8 19.5 6.2C17.5 8 16 9 14.2 9.6C13.2 8.5 12.2 7.8 11 7.2Z" fill="#fff"/></svg>
<svg class="abs" style="left:907px;top:12px" width="24" height="24" viewBox="0 0 24 24"><rect width="24" height="24" fill="#d80c1c"/><path d="M2.5 15.5C2.5 12 4 9.5 7 8.5C10 7.2 14 7.5 16.5 9.5L21 12.5C21.8 13 21.8 14.5 21 14.8L15 15.5C14.5 17.5 12 17.8 11 16L7 16.5C6.5 18.5 3.5 18.8 2.5 15.5Z" fill="#f6e8ea"/><path d="M7.5 10.5C9 9.3 12 9.2 14 10.5L12.5 12H7Z" fill="#d80c1c"/></svg>
<svg class="abs" style="left:951px;top:12px" width="25" height="24" viewBox="0 0 25 24"><circle cx="14" cy="4" r="3.2" fill="#7b83eb"/><circle cx="21" cy="6" r="2.4" fill="#5b5fc7"/><path d="M9 9H19V17A5 5 0 0 1 9 17Z" fill="#7b83eb"/><path d="M18 10H24V16A3 3 0 0 1 18 16Z" fill="#5b5fc7"/><rect x="1" y="7" width="12" height="12" rx="1" fill="#4b53bc"/><path d="M4 10H10M7 10V16" stroke="#fff" stroke-width="1.8"/></svg>
<svg class="abs" style="left:995px;top:12px" width="24" height="24" viewBox="0 0 24 24"><path d="M8 6V3A2 2 0 0 1 10 1H14A2 2 0 0 1 16 3V6" stroke="#2a8ad8" stroke-width="1.8" fill="none"/><path d="M1 6H23V20A3 3 0 0 1 20 23H4A3 3 0 0 1 1 20Z" fill="#114c94"/><rect x="7" y="9" width="4.5" height="4.5" fill="#f25022"/><rect x="12.5" y="9" width="4.5" height="4.5" fill="#7fba00"/><rect x="7" y="14.5" width="4.5" height="4.5" fill="#00a4ef"/><rect x="12.5" y="14.5" width="4.5" height="4.5" fill="#ffb900"/></svg>
<svg class="abs" style="left:1039px;top:13px" width="24" height="22" viewBox="0 0 24 22"><path d="M0 2A2 2 0 0 1 2 0H8L10 2H22A2 2 0 0 1 24 4V20A2 2 0 0 1 22 22H2A2 2 0 0 1 0 20Z" fill="#f0b828"/><path d="M0 5H24V20A2 2 0 0 1 22 22H2A2 2 0 0 1 0 20Z" fill="#ffd55a"/><path d="M4 14A2 2 0 0 1 6 12H18A2 2 0 0 1 20 14V22H4Z" fill="#1a78d0"/></svg>
<div class="abs" style="left:1048px;top:41px;width:6px;height:3px;border-radius:2px;background:#6d7f80"></div>
<div class="abs" style="left:1076px;top:5px;width:37px;height:38px;border-radius:4px;background:rgba(255,255,255,.45)"></div>
<svg class="abs" style="left:1083px;top:11px" width="24" height="24" viewBox="0 0 24 24"><circle cx="12" cy="12" r="12" fill="#db4437"/><path d="M12 12L1.6 6A12 12 0 0 0 12 24Z" fill="#0f9d58"/><path d="M12 12L12 24A12 12 0 0 0 22.4 6Z" fill="#ffcd40"/><path d="M12 12L22.4 6A12 12 0 0 0 1.6 6Z" fill="#db4437"/><circle cx="12" cy="12" r="5.5" fill="#fff"/><circle cx="12" cy="12" r="4.3" fill="#4285f4"/></svg>
<div class="abs" style="left:1087px;top:40px;width:16px;height:3px;border-radius:2px;background:#0a6fc4"></div>
<svg class="abs" style="left:1127px;top:11px" width="24" height="24" viewBox="0 0 24 24"><defs><linearGradient id="lg1127" x1="0" y1="0" x2="1" y2="1"><stop offset="0" stop-color="#d8ecf8"/><stop offset="0.35" stop-color="#4a9ad0"/><stop offset="0.6" stop-color="#1a3a80"/><stop offset="1" stop-color="#101a58"/></linearGradient></defs><circle cx="12" cy="12" r="11.5" fill="url(#lg1127)"/><path d="M4 15.5H11L16 6.5C17 5 19.5 5.5 19 7.5L14 15L9.5 21" stroke="#fff" stroke-width="2.4" fill="none" stroke-linejoin="round"/></svg>
<svg class="abs" style="left:1171px;top:11px" width="24" height="24" viewBox="0 0 24 24"><defs><linearGradient id="edg" x1="0" y1="1" x2="1" y2="0"><stop offset="0" stop-color="#0c59a4"/><stop offset="0.55" stop-color="#1b9de2"/><stop offset="1" stop-color="#4fd66a"/></linearGradient></defs><circle cx="12" cy="12" r="11.5" fill="url(#edg)"/><path d="M7.5 15.5C7 11.5 10 9 13.5 9.2C17 9.5 18.5 12 18 14H11.5C11 16.5 13.5 18.5 17 18.5C14.5 20.5 8.5 20 7.5 15.5Z" fill="#c4ecf4" opacity="0.85"/><path d="M10.5 15A3 3 0 0 1 16 13H11Z" fill="#1a7ad0"/></svg>
<svg class="abs" style="left:1215px;top:12px" width="24" height="24" viewBox="0 0 24 24"><path d="M3 4H21L23 8V15H1V8Z" fill="#9a1238"/><rect x="6" y="5" width="5" height="4" rx="2" fill="#e8d0e0"/><rect x="13" y="5" width="5" height="4" rx="2" fill="#e8d0e0"/><path d="M4 15L3 20L6 22M19 15L20 20L22 22" stroke="#111" stroke-width="2.4" fill="none"/><rect x="1" y="9" width="22" height="2" fill="#1a1a1a"/></svg>
<div class="abs" style="left:1224px;top:41px;width:6px;height:3px;border-radius:2px;background:#6d7f80"></div>
<svg class="abs" style="left:1259px;top:12px" width="24" height="24" viewBox="0 0 24 24"><path d="M1 1H22L24 10L20 22H3L1 13Z" fill="#d8e0fa" stroke="#3a48b8" stroke-width="1.6"/><path d="M6 1V10L2 13M6 10L15 13L21 5M15 13L15 18H24" stroke="#3a48b8" stroke-width="1.8" fill="none"/><circle cx="7" cy="17" r="5" fill="#c8d0f8" stroke="#3a48b8" stroke-width="1.4"/></svg>
<div class="abs" style="left:1268px;top:41px;width:6px;height:3px;border-radius:2px;background:#6d7f80"></div>
<svg class="abs" style="left:1303px;top:11px" width="25" height="24" viewBox="0 0 25 24"><path d="M9 3L17 0L25 6V20A2 2 0 0 1 23 22H11Z" fill="#1a6ac0"/><path d="M11 12L25 8V20A2 2 0 0 1 23 22H11Z" fill="#3ab8ec"/><rect x="0" y="6" width="13" height="13" rx="1.5" fill="#0b5aae"/><circle cx="6.5" cy="12.5" r="3.5" stroke="#fff" stroke-width="1.8" fill="none"/></svg>
<div class="abs" style="left:1312px;top:41px;width:6px;height:3px;border-radius:2px;background:#6d7f80"></div>
<svg class="abs" style="left:1347px;top:11px" width="24" height="24" viewBox="0 0 24 24"><defs><linearGradient id="lg1347" x1="0" y1="0" x2="1" y2="1"><stop offset="0" stop-color="#d8ecf8"/><stop offset="0.35" stop-color="#4a9ad0"/><stop offset="0.6" stop-color="#1a3a80"/><stop offset="1" stop-color="#101a58"/></linearGradient></defs><circle cx="12" cy="12" r="11.5" fill="url(#lg1347)"/><path d="M4 15.5H11L16 6.5C17 5 19.5 5.5 19 7.5L14 15L9.5 21" stroke="#fff" stroke-width="2.4" fill="none" stroke-linejoin="round"/></svg>
<div class="abs" style="left:1356px;top:41px;width:6px;height:3px;border-radius:2px;background:#6d7f80"></div>
<svg class="abs" style="left:1701px;top:20px" width="12" height="7" viewBox="0 0 12 7"><path d="M1 6L6 1L11 6" stroke="#1f3535" stroke-width="1.4" fill="none"/></svg>
<svg class="abs" style="left:1730px;top:17px" width="18" height="16" viewBox="0 0 18 16"><path d="M3.5 11A3.2 3.2 0 0 1 3 4.8A4.6 4.6 0 0 1 11.5 3.6A3.4 3.4 0 0 1 14 9" fill="#6e7474"/><circle cx="12.5" cy="10.5" r="5" fill="#c4313a"/><path d="M10.6 8.6L14.4 12.4M14.4 8.6L10.6 12.4" stroke="#fff" stroke-width="1.3"/></svg>
<svg class="abs" style="left:1763px;top:18px" width="17" height="13" viewBox="0 0 17 13"><path d="M1 5A10.5 10.5 0 0 1 16 5M3.5 7.6A7 7 0 0 1 13.5 7.6M6 10.2A3.5 3.5 0 0 1 11 10.2" stroke="#1a2a2a" stroke-width="1.3" fill="none"/><circle cx="8.5" cy="11.8" r="1.2" fill="#1a2a2a"/></svg>
<svg class="abs" style="left:1787px;top:17px" width="17" height="15" viewBox="0 0 17 15"><path d="M1 5H4L8 1.5V13.5L4 10H1Z" stroke="#1a2a2a" stroke-width="1.2" fill="none"/><path d="M10.5 5A3 3 0 0 1 10.5 10M12.5 3A6 6 0 0 1 12.5 12M14.5 1A9 9 0 0 1 14.5 14" stroke="#1a2a2a" stroke-width="1.2" fill="none"/></svg>
<div class="abs" style="left:1776px;top:10px;width:100px;font-size:11.5px;line-height:13px;color:#1a2020;text-align:right;white-space:nowrap">13:01</div>
<div class="abs" style="left:1776px;top:26px;width:100px;font-size:11.5px;line-height:13px;color:#1a2020;text-align:right;white-space:nowrap">06.08.2025</div>
<svg class="abs" style="left:1885px;top:16px" width="15" height="17" viewBox="0 0 15 17"><path d="M6.5 2.5A4.5 4.5 0 0 1 11 7V10.5L12.5 12.5H0.5L2 10.5V7A4.5 4.5 0 0 1 6.5 2.5Z" fill="#1a2424"/><path d="M5 14H8A1.5 1.5 0 0 1 5 14Z" fill="#1a2424"/><path d="M4.5 6H8L4.5 10H8" stroke="#c2edf0" stroke-width="1.1" fill="none"/><path d="M10.5 0.8H14L10.5 4.5H14" stroke="#1a2424" stroke-width="1" fill="none"/></svg>
</div>
</body></html>
